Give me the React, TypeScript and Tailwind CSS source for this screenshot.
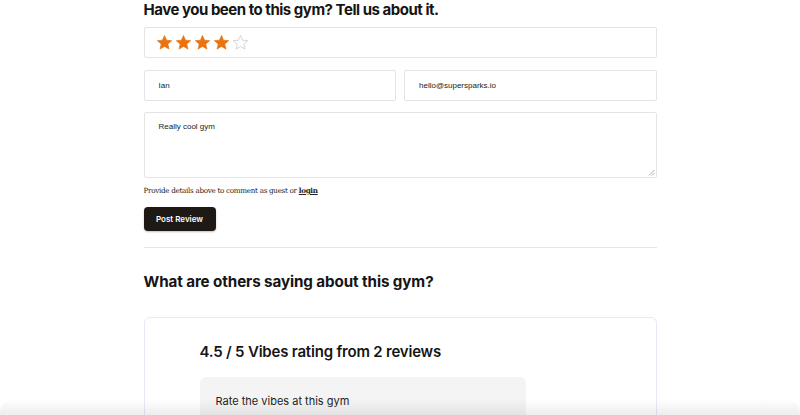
import React from "react";

function Star({ filled }: { filled: boolean }) {
  return (
    <svg width="17" height="17" viewBox="0 0 24 24" className="block">
      <path
        d="M12 2.2l2.9 6.6 7.2.6-5.5 4.8 1.7 7.1L12 17.5l-6.3 3.8 1.7-7.1L1.9 9.4l7.2-.6z"
        fill={filled ? "#ea7310" : "none"}
        stroke={filled ? "#ea7310" : "#c9c9c9"}
        strokeWidth={filled ? 1 : 1.1}
        strokeLinejoin="round"
      />
    </svg>
  );
}

const heading = { fontFamily: "Inter, 'Noto Sans', sans-serif" };
const arial = { fontFamily: "'Liberation Sans', Arial, sans-serif" };

export default function App() {
  return (
    <div className="relative h-[415px] w-[800px] overflow-hidden bg-white text-[#111]">
      <div className="mx-auto w-[513px]">
        <h2 style={heading} className="text-[15px] font-bold leading-[19px] tracking-[-0.48px] text-[#151515]">
          Have you been to this gym? Tell us about it.
        </h2>

        <div className="mt-[8px] flex h-[31px] items-center gap-[2px] rounded-[2px] border border-[#e4e4e4] pl-[11px]">
          {[1, 2, 3, 4, 5].map((n) => (
            <Star key={n} filled={n <= 4} />
          ))}
        </div>

        <div className="mt-[12px] flex gap-[8px]">
          <div style={arial} className="flex h-[31px] flex-1 items-center rounded-[2px] border border-[#e4e4e4] pl-[14px] text-[8px] leading-[10px] text-[#222]">
            Ian
          </div>
          <div style={arial} className="flex h-[31px] flex-1 items-center rounded-[2px] border border-[#e4e4e4] pl-[14px] text-[8px] leading-[10px] text-[#222]">
            hello@supersparks.io
          </div>
        </div>

        <div style={arial} className="relative mt-[11px] h-[66px] rounded-[2px] border border-[#e4e4e4] pl-[14px] pt-[9px] text-[8px] leading-[10px] text-[#222]">
          Really cool gym
          <svg width="7" height="7" viewBox="0 0 7 7" className="absolute bottom-[1px] right-[1px]">
            <path d="M6.5 1L1 6.5M6.5 4L4 6.5" stroke="#999" strokeWidth="0.8" />
          </svg>
        </div>

        <p style={{ fontFamily: "'DejaVu Serif', 'Liberation Serif', serif" }} className="mt-[8px] text-[7.2px] leading-[10px] tracking-[-0.3px] text-[#222]">
          Provide details above to comment as guest or{" "}
          <span className="font-bold underline">login</span>
        </p>

        <button
          style={heading}
          className="mt-[11px] flex h-[24px] w-[72px] items-center justify-center rounded-[4px] bg-[#1e1915] text-[8px] font-semibold text-white shadow-[0_1px_2px_rgba(0,0,0,0.25)]"
        >
          Post Review
        </button>

        <div className="mt-[16px] h-px bg-[#e6e6e6]" />

        <h3 style={heading} className="mt-[24px] text-[15.2px] font-bold leading-[19px] tracking-[-0.1px] text-[#151515]">
          What are others saying about this gym?
        </h3>

        <div className="mt-[26px] h-[120px] rounded-[6px] border border-[#e8e9f4] pl-[55px] pt-[24px]">
          <div style={heading} className="text-[15px] font-semibold leading-[20px] tracking-[-0.2px] text-[#151515]">
            4.5 / 5 Vibes rating from 2 reviews
          </div>
          <div className="mt-[15px] h-[60px] w-[326px] rounded-[6px] bg-[#f4f4f4] pl-[16px] pt-[10px]">
            <span style={heading} className="text-[11px] text-[#222]">
              Rate the vibes at this gym
            </span>
          </div>
        </div>
      </div>

      <div className="pointer-events-none absolute bottom-0 left-0 right-0 h-[16px] rounded-t-[14px] bg-gradient-to-b from-transparent to-[rgba(0,0,0,0.07)]" />
    </div>
  );
}
